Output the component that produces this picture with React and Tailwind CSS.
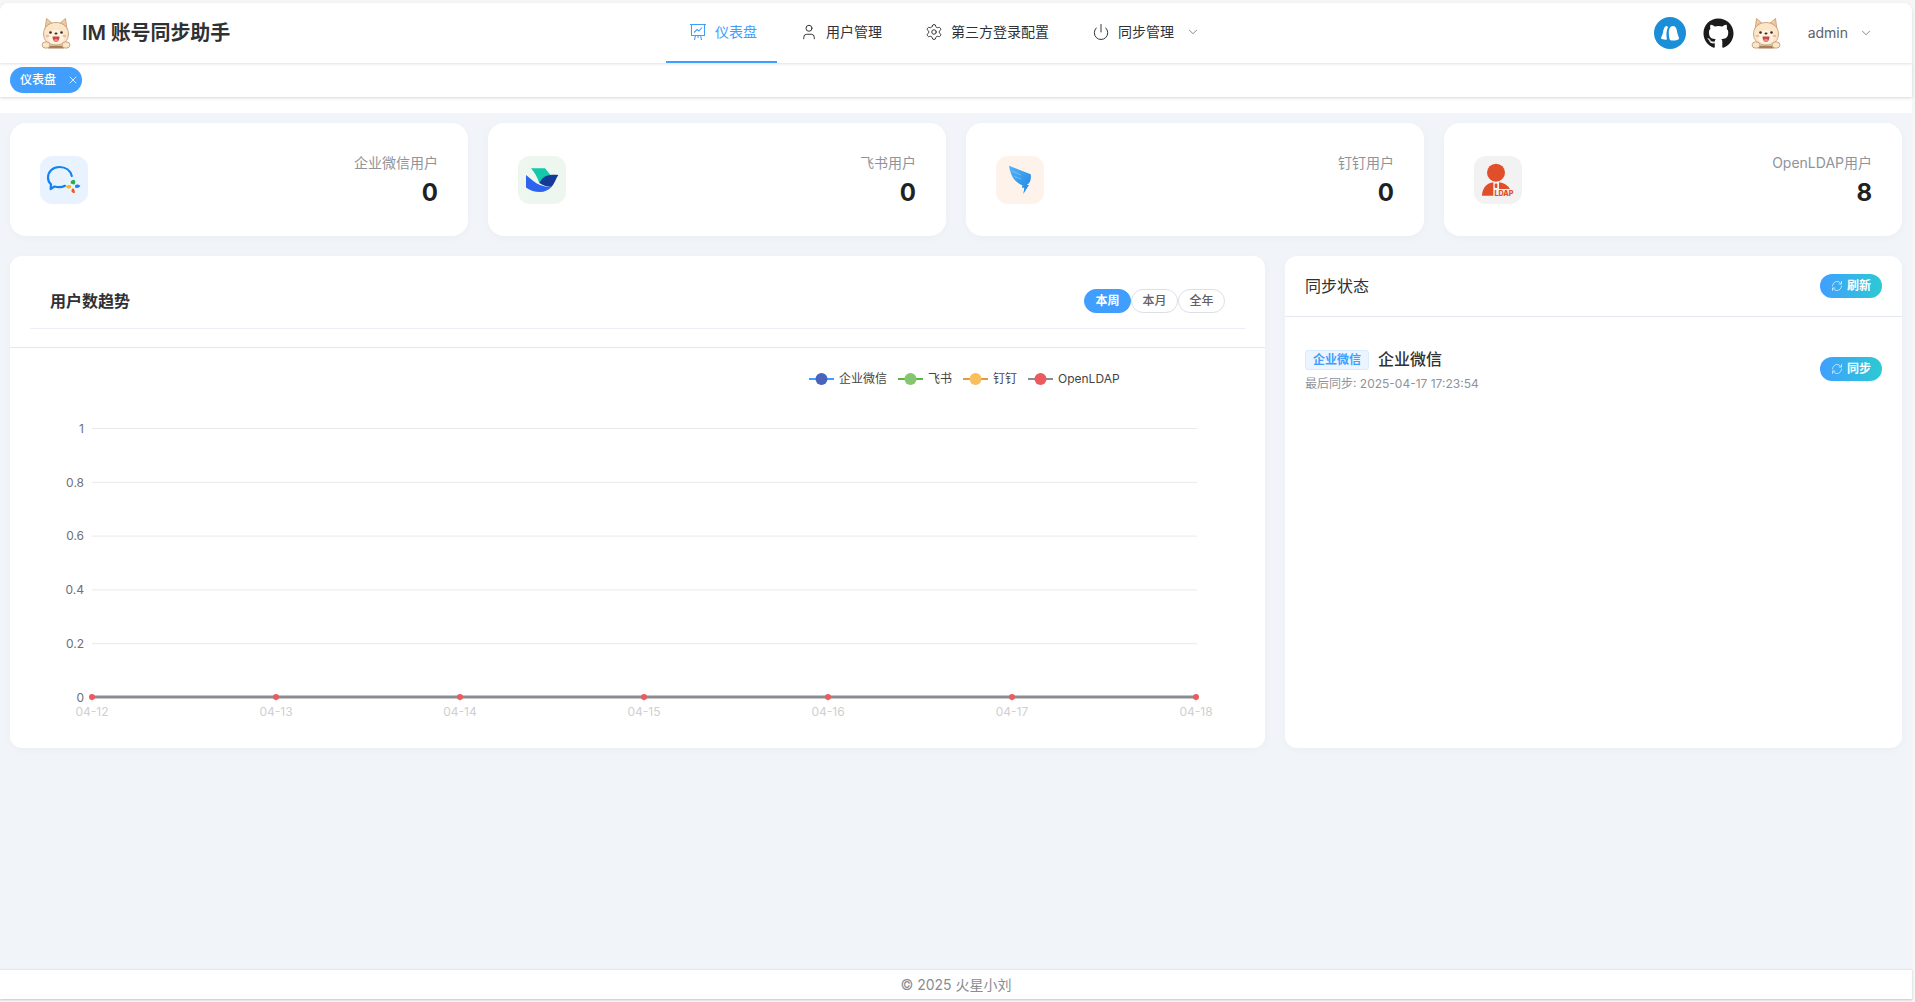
import { useState } from "react";
import { User, Settings, Power, ChevronDown, RefreshCw, X } from "lucide-react";
import { FaGithub } from "react-icons/fa";

const stats = [
  { label: "企业微信用户", value: 0, bg: "bg-[#e9f3ff]", icon: <WecomIcon /> },
  { label: "飞书用户", value: 0, bg: "bg-[#edf7ef]", icon: <LarkIcon /> },
  { label: "钉钉用户", value: 0, bg: "bg-[#fdf3ea]", icon: <DingIcon /> },
  { label: "OpenLDAP用户", value: 8, bg: "bg-[#f2f2f2]", icon: <LdapIcon /> },
];

const dates = ["04-12", "04-13", "04-14", "04-15", "04-16", "04-17", "04-18"];
const yTicks = ["1", "0.8", "0.6", "0.4", "0.2", "0"];

const legend = [
  { name: "企业微信", x: 809, line: "#409eff", dot: "#4765bd" },
  { name: "飞书", x: 898, line: "#5cb83c", dot: "#85c66e" },
  { name: "钉钉", x: 963, line: "#e6983e", dot: "#f8bf5b" },
  { name: "OpenLDAP", x: 1028, line: "#8a8c94", dot: "#eb5a5f" },
];

function DogLogo() {
  return (
    <svg width="30" height="32" viewBox="0 0 30 32">
      <path d="M4 13 5.5 1.5 12 7M26 13 24.5 1.5 18 7" fill="#f3cfa0" stroke="#b48a60" strokeWidth="0.7" />
      <path d="M6 11 6.5 5 10 8M24 11 23.5 5 20 8" fill="#f8b9a8" />
      <path d="M15 5.5C22 5.5 27.5 10 27.5 17 27.5 24 22 28 15 28 8 28 2.5 24 2.5 17 2.5 10 8 5.5 15 5.5Z" fill="#fbe6c8" stroke="#b48a60" strokeWidth="0.7" />
      <ellipse cx="15" cy="20" rx="8" ry="7" fill="#fff4e3" />
      <circle cx="9.5" cy="15.5" r="1.3" fill="#3a2a20" />
      <circle cx="20.5" cy="15.5" r="1.3" fill="#3a2a20" />
      <ellipse cx="6.5" cy="19" rx="2" ry="1.2" fill="#f8b9a8" />
      <ellipse cx="23.5" cy="19" rx="2" ry="1.2" fill="#f8b9a8" />
      <ellipse cx="15" cy="16.5" rx="1.5" ry="1.1" fill="#3a2a20" />
      <path d="M11.5 19.5H18.5C18.5 23 17 25 15 25 13 25 11.5 23 11.5 19.5Z" fill="#c9473f" />
      <ellipse cx="15" cy="23.3" rx="2" ry="1.6" fill="#f08a80" />
      <rect x="7" y="28.5" width="16" height="3" fill="#a97f55" />
      <ellipse cx="5" cy="28" rx="4" ry="3.2" fill="#fbe6c8" stroke="#b48a60" strokeWidth="0.7" />
      <ellipse cx="25" cy="28" rx="4" ry="3.2" fill="#fbe6c8" stroke="#b48a60" strokeWidth="0.7" />
    </svg>
  );
}

function DataLineIcon() {
  return (
    <svg width="18" height="18" viewBox="0 0 18 18" fill="none" stroke="currentColor" strokeWidth="1.1">
      <path d="M1 1.5H17M2.5 1.5V12.5H15.5V1.5" />
      <path d="M5 9.5 8 6.5 10 8 13 4.5" />
      <path d="M6.5 12.5 5.5 17M11.5 12.5 12.5 17M9 12.5V15" />
    </svg>
  );
}

function BuddyIcon() {
  return (
    <svg width="32" height="32" viewBox="0 0 32 32">
      <circle cx="16" cy="16" r="16" fill="#1a8fd8" />
      <path d="M12 9C10 10 9.4 13 9 15.5 8.6 18 7 19.8 7 21.6 8.4 22.6 11 23 13 22.6 12.2 19 12 14 14 10 13.5 9.4 12.8 8.8 12 9Z" fill="#fff" />
      <path d="M19 9C16 9 14.8 12.4 14.8 15.5 14.8 18.4 15 20.8 16 23 18 24 22.5 23.8 25 22 25.2 20 23.6 18 23.2 15.2 22.8 12.4 22 9 19 9Z" fill="#fff" />
    </svg>
  );
}

function WecomIcon() {
  return (
    <svg width="48" height="48" viewBox="0 0 48 48">
      <path d="M25 29.8C23.4 30.7 21.2 31.2 19.2 31.2 17.2 31.2 15.8 31 14.5 30.5L10.6 33 11 28.4C9 26.6 8 24.2 8 21.5 8 15.4 13 11 19.5 11 25.5 11 30.4 14.5 31.8 20" fill="none" stroke="#1482f0" strokeWidth="2.2" strokeLinecap="round" strokeLinejoin="round" />
      <path d="M30.6 27C30.6 25 32 23.8 34.2 23.8 35.6 24.8 35.6 26.8 34.4 28.4 33 28.6 31.8 28.2 30.6 27Z" fill="#2aae4a" />
      <path d="M35.2 29.2C36.6 28 38.6 28.2 40.4 30 39 31.8 36.8 32.4 35 31.4Z" fill="#1482f0" />
      <path d="M31.8 33C33.4 31.8 35 33.2 34.8 37 33.6 37.4 32.4 36.6 31.4 35.2Z" fill="#f1591e" />
      <path d="M30.8 32C29.6 33 27.2 32.6 25.8 30.8 27.4 29 30 28.6 31.2 29.6Z" fill="#fbb51c" />
    </svg>
  );
}

function LarkIcon() {
  return (
    <svg width="48" height="48" viewBox="0 0 48 48">
      <path d="M13 12.3H27L32.7 19.3 21.3 27C19.5 21.5 16.5 16.5 13 12.3Z" fill="#12c9ab" />
      <path d="M8 19C13 23 17 27 22 29 26 30.6 30 30.8 33.7 30.7 30.5 33.8 27 36 22 36 17 36 12 34.5 8 31.5Z" fill="#2c64f0" />
      <path d="M21.3 27C23 24 25 21.3 28 20 32 18.5 36.5 18.5 40.3 19 38 22.5 36.5 27.5 33.7 30.7 29.5 31 25 29.5 21.3 27Z" fill="#133a96" />
    </svg>
  );
}

function DingIcon() {
  return (
    <svg width="48" height="48" viewBox="0 0 48 48">
      <defs>
        <linearGradient id="ding" x1="0" y1="0" x2="1" y2="1">
          <stop offset="0" stopColor="#55b4f6" />
          <stop offset="1" stopColor="#1d86e6" />
        </linearGradient>
      </defs>
      <path d="M13 9.7 34.7 18.3C35.2 21.5 34.8 25 33 27.3L30.7 29H33L27.3 38 28.3 31.7H25.7L26.5 29.5C22 27.5 17.5 24 15.5 19 14.5 16 13.5 13 13 9.7Z" fill="url(#ding)" />
      <path d="M15.5 15 25 19M18 20.5 25 23" stroke="#8fcdf8" strokeWidth="0.6" fill="none" />
    </svg>
  );
}

function LdapIcon() {
  return (
    <svg width="48" height="48" viewBox="0 0 48 48">
      <circle cx="22" cy="16.7" r="9" fill="#e04f2a" />
      <path d="M19.3 26.3C13 27 8 32 8 39.7H19.3Z" fill="#e04f2a" />
      <path d="M25 26.3C30 27 34 29.5 36 33H25Z" fill="#e04f2a" />
      <rect x="20.7" y="27.5" width="2.6" height="4.6" rx="1" fill="#e04f2a" />
      <text x="20.4" y="40" fontSize="7.2" fontWeight="800" fill="#e04f2a">LDAP</text>
    </svg>
  );
}

function NavItem({ icon, label, active, arrow }) {
  return (
    <div
      className={`flex items-center h-[60px] px-5 text-sm border-b-2 ${
        active ? "text-[#409eff] border-[#409eff]" : "text-[#303133] border-transparent"
      }`}
    >
      <span className="w-6 h-6 mr-[5px] flex items-center justify-center">{icon}</span>
      <span>{label}</span>
      {arrow && <ChevronDown size={14} strokeWidth={1.3} className="ml-[12px] text-[#606266]" />}
    </div>
  );
}

function GradientButton({ label, className = "" }) {
  return (
    <button className={`flex items-center justify-center gap-1 w-[62px] h-6 rounded-full text-xs font-semibold text-white bg-gradient-to-r from-[#409eff] to-[#2dc9d2] ${className}`}>
      <RefreshCw size={12} strokeWidth={1.6} className="opacity-80" />
      {label}
    </button>
  );
}

function TrendChart() {
  const xs = dates.map((_, i) => 92 + i * 184);
  const ys = yTicks.map((_, i) => 428 + i * 53.8);
  return (
    <svg className="block w-[1255px] h-[400px]" viewBox="10 348 1255 400">
      {legend.map((item) => (
        <g key={item.name}>
          <line x1={item.x} x2={item.x + 25} y1="379" y2="379" stroke={item.line} strokeWidth="2" />
          <circle cx={item.x + 12.5} cy="379" r="6" fill={item.dot} />
          <text x={item.x + 30} y="379.5" fontSize="12" fill="#444" dominantBaseline="middle">
            {item.name}
          </text>
        </g>
      ))}
      {yTicks.map((t, i) => (
        <g key={t}>
          {i < 5 && <line x1="92" x2="1197" y1={ys[i] + 0.5} y2={ys[i] + 0.5} stroke="#e9e9e9" />}
          <text x="84" y={ys[i] + 1.5} fontSize="12" fill="#6e7079" textAnchor="end" dominantBaseline="middle">
            {t}
          </text>
        </g>
      ))}
      <line x1="92" x2="1197" y1="697" y2="697" stroke="#d8d9dc" strokeWidth="4" />
      <line x1="92" x2="1197" y1="697" y2="697" stroke="#8a8c94" strokeWidth="2.4" />
      {dates.map((d, i) => (
        <g key={d}>
          <line x1={xs[i]} x2={xs[i]} y1="697" y2="702" stroke="#dcdcdc" />
          <circle cx={xs[i]} cy="697" r="3" fill="#eb5a5f" />
          <text x={xs[i]} y="713" fontSize="12" fill="#cfcfcf" textAnchor="middle" dominantBaseline="middle">
            {d}
          </text>
        </g>
      ))}
    </svg>
  );
}

export default function App() {
  const [range, setRange] = useState("本周");

  return (
    <div className="h-[1002px] overflow-hidden bg-[#f6f6f6] pt-[3px] pr-[3px] pb-[3px] font-[Inter,'Noto_Sans_CJK_SC',sans-serif]">
      <div className="flex flex-col h-full bg-white rounded-t-lg">
        <header className="relative z-20 flex items-center justify-between h-[60px] bg-white rounded-t-lg shadow-[0_1px_3px_rgba(0,0,0,0.12)]">
          <div className="flex items-center w-[666px] pl-[41px]">
            <DogLogo />
            <span className="ml-[11px] text-[20px] font-semibold tracking-[-0.1px] text-[#303133]">IM 账号同步助手</span>
          </div>
          <nav className="flex flex-1">
            <NavItem active icon={<DataLineIcon />} label="仪表盘" />
            <NavItem icon={<User size={18} strokeWidth={1.3} />} label="用户管理" />
            <NavItem icon={<Settings size={18} strokeWidth={1.3} />} label="第三方登录配置" />
            <NavItem icon={<Power size={18} strokeWidth={1.3} />} label="同步管理" arrow />
          </nav>
          <div className="flex items-center pr-[39px]">
            <BuddyIcon />
            <FaGithub size={31} className="ml-[17px] text-[#1b1b1b]" />
            <span className="ml-[17px]"><DogLogo /></span>
            <span className="ml-[27px] text-sm text-[#606266]">admin</span>
            <ChevronDown size={14} strokeWidth={1.3} className="ml-[11px] text-[#606266]" />
          </div>
        </header>

        <div className="relative z-10 flex items-center h-[34px] px-[10px] bg-white shadow-[0_1px_3px_rgba(0,0,0,0.16)]">
          <span className="flex items-center h-[26px] w-[72px] pl-[10px] rounded-full bg-[#409eff] text-xs font-medium text-white">
            仪表盘
            <X size={12} strokeWidth={1.6} className="ml-[11px]" />
          </span>
        </div>

        <div className="h-4 shrink-0 bg-white" />

        <main className="flex-1 p-[10px] bg-[#f1f4f8]">
          <div className="grid grid-cols-4 gap-5">
            {stats.map((s) => (
              <div key={s.label} className="flex items-center justify-between h-[113px] px-[30px] bg-white rounded-2xl shadow-[0_2px_8px_rgba(0,0,0,0.03)]">
                <div className={`w-12 h-12 rounded-xl ${s.bg}`}>{s.icon}</div>
                <div className="pt-[3px] text-right">
                  <div className="text-sm leading-5 text-[#909399]">{s.label}</div>
                  <div className="mt-1 text-2xl leading-8 font-bold text-[#1f2225]">{s.value}</div>
                </div>
              </div>
            ))}
          </div>

          <div className="flex gap-5 mt-5">
            <section className="w-[1255px] h-[492px] bg-white rounded-xl shadow-[0_2px_8px_rgba(0,0,0,0.03)]">
              <div className="flex items-center justify-between h-[73px] mx-5 px-5 pt-[18px] border-b border-[#ebeef5]">
                <h2 className="text-base font-semibold text-[#303133]">用户数趋势</h2>
                <div className="flex">
                  {["本周", "本月", "全年"].map((r) => (
                    <button
                      key={r}
                      onClick={() => setRange(r)}
                      className={`w-[47px] h-6 rounded-full text-xs border ${
                        range === r
                          ? "bg-[#409eff] border-[#409eff] text-white font-semibold"
                          : "bg-white border-[#dcdfe6] text-[#606266] font-medium"
                      }`}
                    >
                      {r}
                    </button>
                  ))}
                </div>
              </div>
              <div className="h-[19px] border-b border-[#e4e7ed]" />
              <TrendChart />
            </section>

            <section className="w-[617px] h-[492px] bg-white rounded-xl shadow-[0_2px_8px_rgba(0,0,0,0.03)]">
              <div className="flex items-center justify-between h-[61px] px-5 border-b border-[#e4e7ed]">
                <h2 className="text-base text-[#303133]">同步状态</h2>
                <GradientButton label="刷新" />
              </div>
              <div className="flex items-start justify-between px-5 pt-[33px]">
                <div>
                  <div className="flex items-center h-5">
                    <span className="flex items-center justify-center w-16 h-5 rounded-[3px] bg-[#ecf5ff] border border-[#d9ecff] text-xs font-semibold text-[#409eff]">
                      企业微信
                    </span>
                    <span className="ml-[9px] pb-[3px] text-base font-medium text-[#303133]">企业微信</span>
                  </div>
                  <div className="mt-[5px] text-xs leading-[18px] text-[#909399]">最后同步: 2025-04-17 17:23:54</div>
                </div>
                <GradientButton label="同步" className="mt-[7px]" />
              </div>
            </section>
          </div>
        </main>

        <footer className="flex items-center justify-center h-[30px] bg-white border-t border-[#e4e7ed] text-sm text-[#8a8c92] shadow-[0_1px_2px_rgba(0,0,0,0.2)]">
          © 2025 火星小刘
        </footer>
      </div>
    </div>
  );
}
